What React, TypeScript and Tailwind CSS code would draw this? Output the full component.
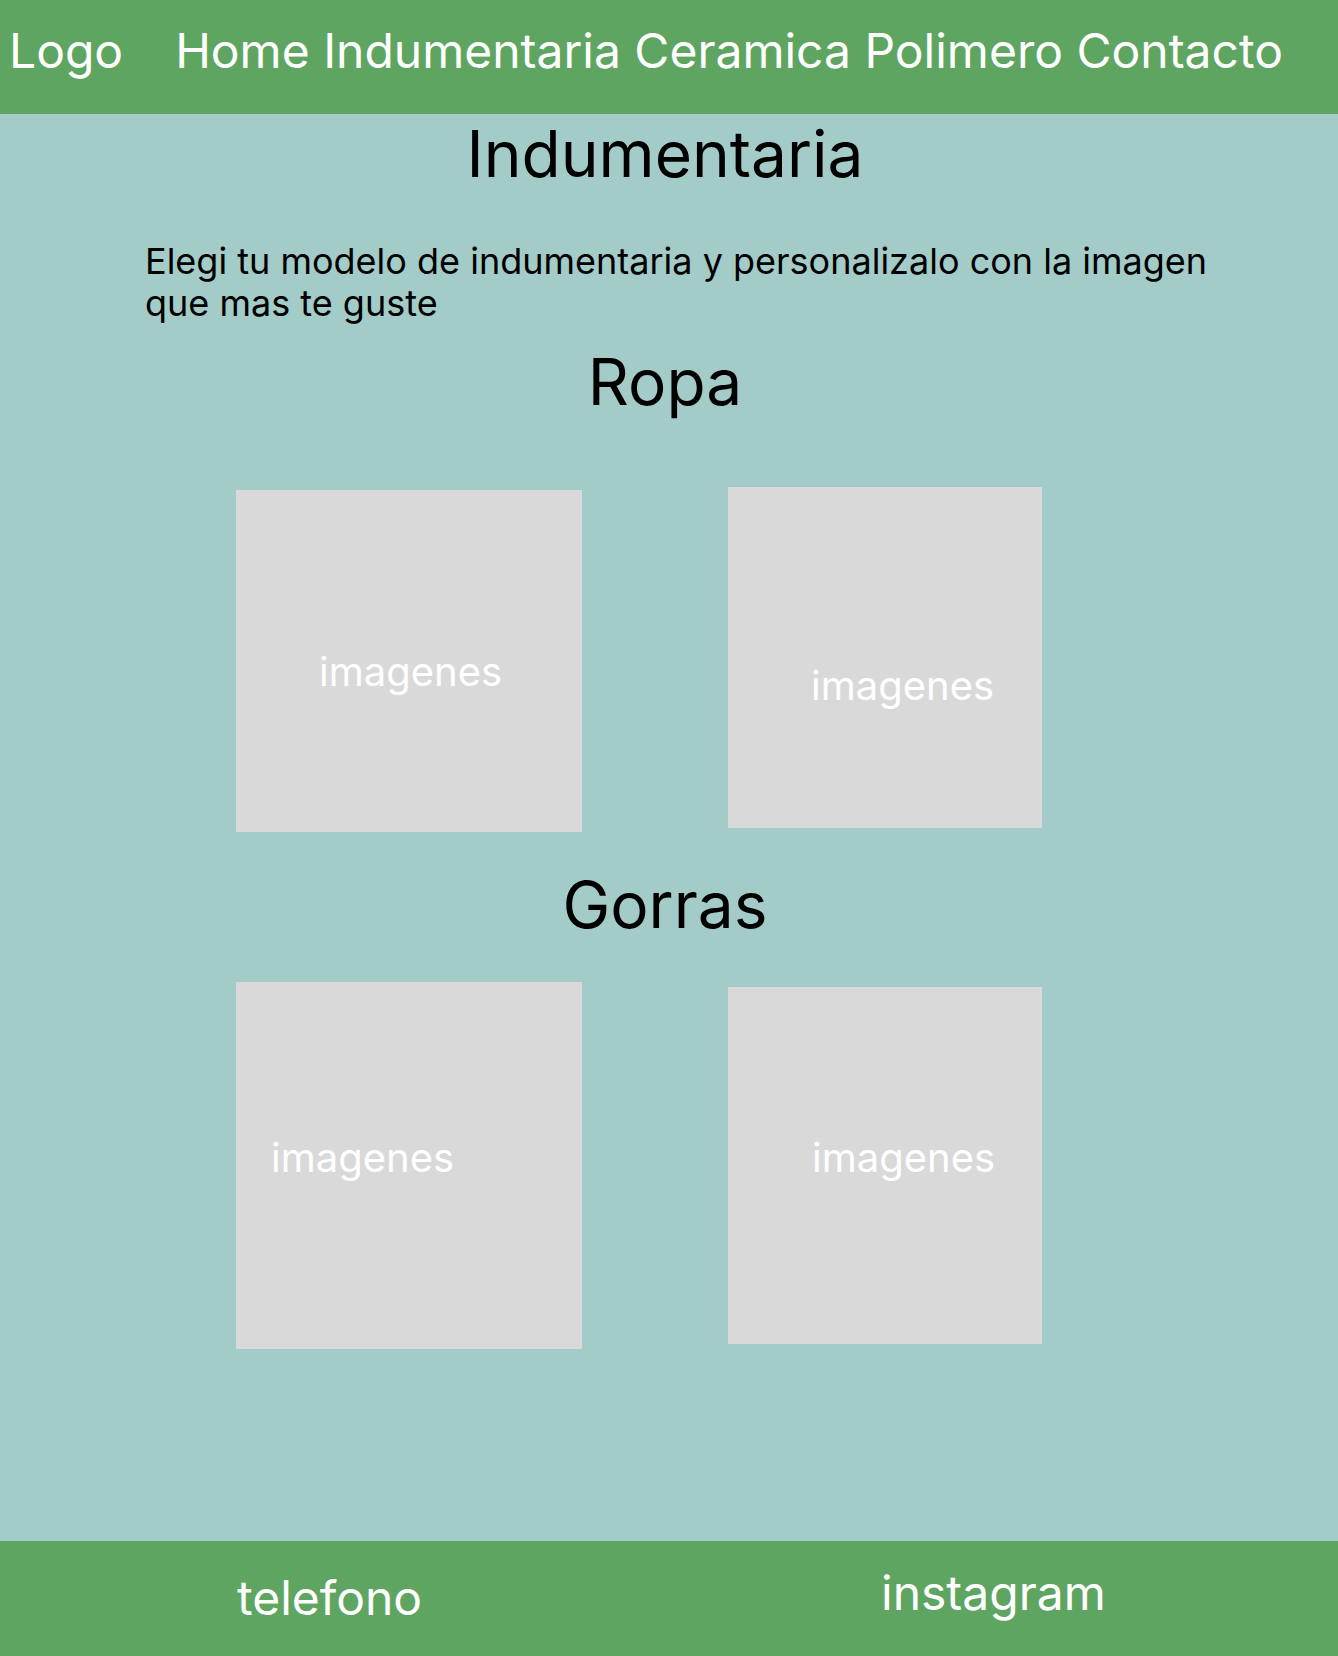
import React from "react";

const font = { fontFamily: "Inter, 'Noto Sans', sans-serif" };

function Box({ className }: { className: string }) {
  return (
    <div className={`bg-[#d9d9d9] ${className}`}>
      <p className="text-[40px] leading-none text-white">imagenes</p>
    </div>
  );
}

export default function App() {
  return (
    <div className="flex h-[1656px] flex-col bg-[#a3cbc7]" style={font}>
      <header className="flex h-[114px] shrink-0 items-start gap-[52px] bg-[#5fa562] pl-[9px] pt-[27px] text-[48px] leading-none text-white">
        <span>Logo</span>
        <nav>Home Indumentaria Ceramica Polimero Contacto</nav>
      </header>

      <main className="flex-1 pr-[8px] pt-[8px] text-black">
        <h1 className="text-center text-[64px] leading-none">Indumentaria</h1>
        <p className="mt-[54px] w-[1235px] pl-[145px] text-[36px] leading-[42px]">
          Elegi tu modelo de indumentaria y personalizalo con la imagen que mas te guste
        </p>

        <h2 className="mt-[26px] text-center text-[64px] leading-none">Ropa</h2>
        <div className="mt-[73px] flex items-start gap-[146px] pl-[236px]">
          <Box className="mt-[3px] h-[342px] w-[346px] pl-[83px] pt-[162px]" />
          <Box className="h-[341px] w-[314px] pl-[83px] pt-[179px]" />
        </div>

        <h2 className="mt-[41px] text-center text-[64px] leading-none">Gorras</h2>
        <div className="mt-[45px] flex items-start gap-[146px] pl-[236px]">
          <Box className="h-[367px] w-[346px] pl-[35px] pt-[156px]" />
          <Box className="mt-[5px] h-[357px] w-[314px] pl-[84px] pt-[151px]" />
        </div>
      </main>

      <footer className="flex h-[115px] shrink-0 items-start bg-[#5fa562] text-[48px] leading-none text-white">
        <span className="ml-[237px] mt-[33px] w-[644px]">telefono</span>
        <span className="mt-[28px]">instagram</span>
      </footer>
    </div>
  );
}
